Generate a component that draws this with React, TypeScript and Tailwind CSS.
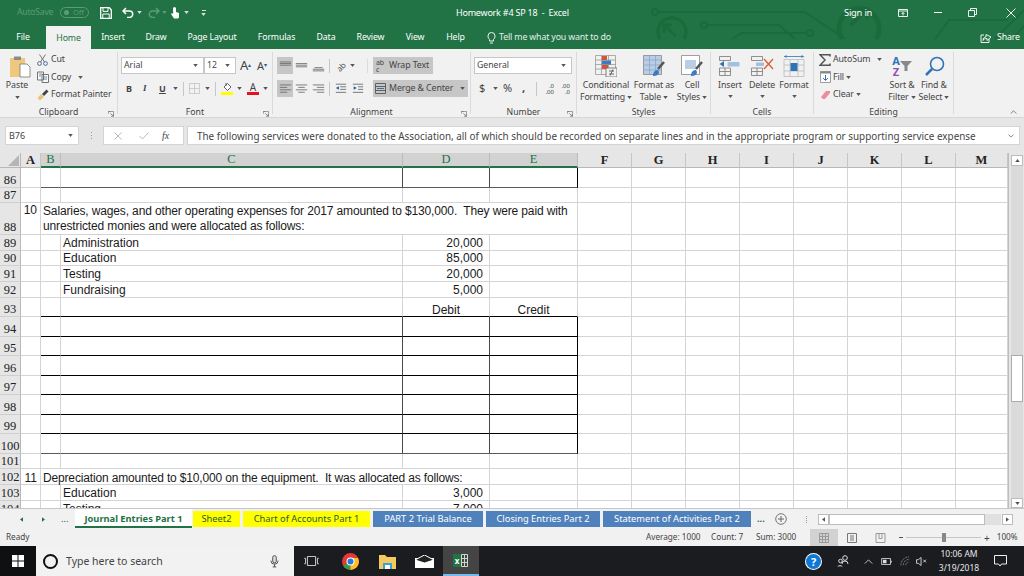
import React from "react";

const ui = "font-['Noto_Sans',sans-serif]";

function Ic({ w, h, vb, children, className = "" }: { w: string; h?: string; vb: string; children: React.ReactNode; className?: string }) {
  return (
    <svg viewBox={vb} className={`${w} ${h ?? ""} shrink-0 ${className}`} fill="none">
      {children}
    </svg>
  );
}

const Caret = ({ c = "#555", className = "" }: { c?: string; className?: string }) => (
  <svg viewBox="0 0 6 4" className={`w-[5px] h-[3px] shrink-0 ${className}`}><path d="M0 0h6L3 4z" fill={c} /></svg>
);

function Lines({ kind, active, className = "" }: { kind: string; active?: boolean; className?: string }) {
  const rows: Record<string, [number, number][]> = {
    left: [[1, 15], [1, 10], [1, 15], [1, 10]],
    center: [[1, 15], [4, 12], [1, 15], [4, 12]],
    right: [[1, 15], [6, 15], [1, 15], [6, 15]],
    top: [[1, 15], [1, 15], [1, 15]],
    mid: [[1, 15], [1, 15], [1, 15]],
    bot: [[3, 13], [1, 15], [1, 15]],
  };
  const ys = kind === "top" ? [3, 5, 7] : kind === "mid" ? [5, 7, 9] : kind === "bot" ? [10, 12, 14] : [3, 6, 9, 12];
  const xs = rows[kind];
  return (
    <div className={`w-[16px] h-[17px] shrink-0 flex items-center justify-center ${active ? "bg-[#c6c6c6]" : ""} ${className}`}>
      <svg viewBox="0 0 16 16" className="w-[13px] h-[14px]">
        {ys.map((y, i) => (
          <line key={i} x1={xs[i][0]} x2={xs[i][1]} y1={y} y2={y} stroke="#666" strokeWidth="1" />
        ))}
      </svg>
    </div>
  );
}

function Group({ w, label, launcher, children }: { w: string; label: string; launcher?: boolean; children: React.ReactNode }) {
  return (
    <div className={`${w} shrink-0 flex flex-col mt-[3px] mb-[3px] border-r border-[#dadada]`}>
      <div className="flex-1 flex min-h-0">{children}</div>
      <div className="relative h-[13px] text-center text-[8.7px] leading-[22px] text-[#444]">
        {label}
        {launcher && (
          <svg viewBox="0 0 8 8" className="absolute right-[3px] -bottom-[3px] w-[6px] h-[6px]">
            <path d="M.5 .5h7v7M.5 .5v3M.5.5h3M3 3l4 4M7 4v3H4" stroke="#777" fill="none" strokeWidth="1" />
          </svg>
        )}
      </div>
    </div>
  );
}

function BigBtn({ w, icon, l1, l2, caret2 }: { w: string; icon: React.ReactNode; l1: string; l2?: string; caret2?: boolean }) {
  return (
    <div className={`${w} shrink-0 flex flex-col items-center text-[8.8px] tracking-[-0.1px] leading-[12px] text-[#444] whitespace-nowrap`}>
      <div className="h-[24px] mt-[2px] shrink-0 flex items-center justify-center">{icon}</div>
      <div className="mt-[1px]">{l1}</div>
      {l2 ? (
        <div className="flex items-center gap-[2px]">{l2}{caret2 && <Caret />}</div>
      ) : (
        <div className="h-[12px] flex items-center"><Caret /></div>
      )}
    </div>
  );
}

const Title = () => (
  <div className="relative h-[25px] flex items-center text-white">
    <svg viewBox="0 0 1024 49" className="absolute left-0 top-0 w-[1024px] h-[49px] pointer-events-none">
      <g stroke="#1b6a3c" strokeWidth="2" fill="none">
        <circle cx="655" cy="12" r="3" />
        <path d="M658 12H805L845 39" />
        <circle cx="704" cy="25" r="3" />
        <path d="M707 25H779L795 39" />
        <circle cx="810" cy="33" r="3" />
        <path d="M732 39L742 33H807" />
        <path d="M935 39L949 20H1008" />
        <path d="M995 39L1024 10" />
        <path d="M1012 39L1024 26" />
        <path d="M660 39A14 14 0 1 1 684 39" strokeWidth="3" />
        <path d="M676 36L664 25M664 33V25H672" strokeWidth="3" />
        <path d="M842 39A20 20 0 1 1 876 39" strokeWidth="5" />
        <path d="M851 25L867 9M857 9H867V19" strokeWidth="4" />
      </g>
    </svg>
    <div className="relative w-[456px] shrink-0 flex items-center h-full">
      <span className={`ml-[17px] w-[42px] text-[8.6px] tracking-[-0.2px] text-[#5b9c78] ${ui}`}>AutoSave</span>
      <span className={`ml-[1px] w-[29px] h-[11px] rounded-full border border-[#5b9c78] flex items-center text-[7.5px] text-[#5b9c78] ${ui}`}>
        <span className="ml-[3px] w-[5px] h-[5px] rounded-full bg-[#5b9c78]" />
        <span className="ml-[4px]">Off</span>
      </span>
      <Ic w="w-[12px]" h="h-[12px]" vb="0 0 12 12" className="ml-[11px]">
        <path d="M.7.7h8.6l2 2v8.6H.7z" stroke="#fff" strokeWidth="1.3" />
        <path d="M3 1v3.400h5V1M2.800 11V7h6.400v4" stroke="#fff" strokeWidth="1" />
      </Ic>
      <Ic w="w-[12px]" h="h-[11px]" vb="0 0 12 11" className="ml-[10px]">
        <path d="M4 1L1 4l3 3M1 4h6.500a3.200 3.200 0 0 1 0 6.400H5" stroke="#fff" strokeWidth="1.5" />
      </Ic>
      <Caret c="#ddd" className="ml-[3px]" />
      <Ic w="w-[12px]" h="h-[11px]" vb="0 0 12 11" className="ml-[6px]">
        <path d="M8 1l3 3-3 3M11 4H4.500a3.200 3.200 0 0 0 0 6.400H7" stroke="#5b9c78" strokeWidth="1.5" />
      </Ic>
      <Caret c="#5b9c78" className="ml-[2px]" />
      <Ic w="w-[10px]" h="h-[13px]" vb="0 0 10 13" className="ml-[3px]">
        <path d="M3 2.500a1.500 1.500 0 0 1 3 0V6l3 1v4.500l-1 1H4L1 8l1-1 1.200 1z" fill="#fff" />
      </Ic>
      <Caret c="#ddd" className="ml-[4px]" />
      <div className="ml-[12px] flex flex-col items-center gap-[2px]">
        <span className="w-[4px] h-[1px] bg-[#ddd]" />
        <Caret c="#ddd" />
      </div>
    </div>
    <span className={`relative w-[388px] shrink-0 text-[9px] tracking-[-0.22px] whitespace-pre ${ui}`}>Homework #4 SP 18  -  Excel</span>
    <span className={`relative w-[54px] shrink-0 text-[9.3px] tracking-[-0.2px] ${ui}`}>Sign in</span>
    <Ic w="w-[10px]" h="h-[8px]" vb="0 0 10 8" className="relative">
      <path d="M.5.500h9v7h-9zM.5 2h9M5 6.500V3.500M3.500 5L5 3.500 6.500 5" stroke="#fff" strokeWidth=".9" />
    </Ic>
    <span className="relative ml-[26px] w-[8px] h-[1px] bg-white" />
    <Ic w="w-[9px]" h="h-[9px]" vb="0 0 9 9" className="relative ml-[26px]">
      <path d="M.5 2.500h6v6h-6zM2.500 2.500v-2h6v6h-2" stroke="#fff" strokeWidth=".9" />
    </Ic>
    <Ic w="w-[10px]" h="h-[10px]" vb="0 0 10 10" className="relative ml-[29px]">
      <path d="M.5.500l9 9M9.500.500l-9 9" stroke="#fff" strokeWidth=".9" />
    </Ic>
  </div>
);

const tabs: [string, string][] = [
  ["File", "w-[46px]"], ["Home", "w-[45px]"], ["Insert", "w-[44px]"], ["Draw", "w-[42px]"], ["Page Layout", "w-[70px]"],
  ["Formulas", "w-[59px]"], ["Data", "w-[40px]"], ["Review", "w-[49px]"], ["View", "w-[40px]"], ["Help", "w-[41px]"],
];

const TabRow = () => (
  <div className={`relative h-[24px] flex text-[8.8px] tracking-[-0.15px] text-white ${ui}`}>
    {tabs.map(([t, w]) => (
      <div key={t} className={`${w} shrink-0 text-center ${t === "Home" ? "mt-[1px] h-[23px] leading-[24px] bg-[#f1f1f1] text-[#217346]" : "leading-[25px]"}`}>{t}</div>
    ))}
    <Ic w="w-[9px]" h="h-[13px]" vb="0 0 9 13" className="ml-[11px] mt-[6px]">
      <path d="M2.500 8.500C1.500 7.500 1 6.500 1 5a3.500 3.500 0 0 1 7 0c0 1.500-.5 2.500-1.500 3.500v1.500h-4zM3 12h3" stroke="#fff" strokeWidth=".9" />
    </Ic>
    <span className="ml-[3px] w-[481px] leading-[25px] text-[#e4efe9]">Tell me what you want to do</span>
    <Ic w="w-[12px]" h="h-[11px]" vb="0 0 12 11" className="mt-[7px]">
      <path d="M4 3H1v7.500h8V7M6 5V2.500L11 5 7 8.500V6.500C5 6.500 3.500 7 3 8.500 3 6.500 4 5 6 5z" stroke="#fff" strokeWidth=".9" />
    </Ic>
    <span className="ml-[5px] leading-[25px]">Share</span>
  </div>
);

const Sel = ({ w, t }: { w: string; t: string }) => (
  <div className={`${w} h-[17px] shrink-0 bg-white border border-[#c6c6c6] flex items-center justify-between pl-[2px] pr-[5px] text-[8.7px] text-[#444]`}>
    <span>{t}</span><Caret />
  </div>
);

const Ribbon = () => (
  <div className={`h-[69px] bg-[#f1f1f1] border-b border-[#d6d6d6] flex ${ui}`}>
    <Group w="w-[118px]" label="Clipboard" launcher>
      <div className="w-[35px] shrink-0 flex flex-col items-center text-[8.8px] leading-[12px] text-[#444]">
        <Ic w="w-[22px]" h="h-[23px]" vb="0 0 22 23" className="mt-[3px] ml-[5px]">
          <path d="M1 3h15v19H1z" fill="#edc87e" />
          <path d="M5 1.500h7v3.500H5z" fill="#8a8a8a" />
          <path d="M11 9h7l3 3v10H11z" fill="#fff" stroke="#777" strokeWidth=".8" />
        </Ic>
        <span className="mt-[1px] -ml-[1px]">Paste</span>
        <Caret className="mt-[5px]" />
      </div>
      <div className="flex flex-col text-[8.8px] tracking-[-0.1px] text-[#444] whitespace-nowrap -mt-[1px] ml-[2px]">
        <div className="h-[17.5px] shrink-0 flex items-center">
          <Ic w="w-[11px]" h="h-[12px]" vb="0 0 11 12">
            <circle cx="2.500" cy="9.500" r="1.900" stroke="#4a6f99" strokeWidth="1" />
            <circle cx="8.500" cy="9.500" r="1.900" stroke="#4a6f99" strokeWidth="1" />
            <path d="M3.500 8L8.500.500M7.500 8L2.500.500" stroke="#666" strokeWidth=".9" />
          </Ic>
          <span className="ml-[3px]">Cut</span>
        </div>
        <div className="h-[17.5px] shrink-0 flex items-center">
          <Ic w="w-[12px]" h="h-[12px]" vb="0 0 12 12">
            <path d="M.5 1h6v8h-6zM5 3.500h6.500v8H5z" stroke="#666" strokeWidth=".9" fill="#f8f8f8" />
            <path d="M2 3h3M2 5h2M6.500 6h3.500M6.500 8h3.500" stroke="#4a6f99" strokeWidth=".8" />
          </Ic>
          <span className="ml-[2px]">Copy</span>
          <Caret className="ml-[7px]" />
        </div>
        <div className="h-[17.5px] shrink-0 flex items-center">
          <Ic w="w-[12px]" h="h-[12px]" vb="0 0 12 12">
            <path d="M.5 9L4 5l3 3-4 3.500z" fill="#e8c57a" />
            <path d="M5 5l2 2 4.500-4.500-2-2z" fill="#444" />
          </Ic>
          <span className="ml-[2px]">Format Painter</span>
        </div>
      </div>
    </Group>

    <Group w="w-[155px]" label="Font" launcher>
      <div className="flex flex-col pl-[3px] pt-[5px]">
        <div className="flex items-center">
          <Sel w="w-[83px]" t="Arial" />
          <Sel w="w-[32px]" t="12" />
          <span className="ml-[4px] w-[13px] text-[13px] text-[#444] leading-none">A<sup className="text-[6px] text-[#2b579a]">▴</sup></span>
          <span className="ml-[4px] text-[11px] text-[#444] leading-none">A<sup className="text-[6px] text-[#2b579a]">▾</sup></span>
        </div>
        <div className="flex items-center h-[17px] mt-[6px] text-[9px] text-[#444] font-bold">
          <span className="ml-[5px] w-[7px]">B</span>
          <span className="ml-[10px] w-[4px] italic font-['Liberation_Serif',serif]">I</span>
          <span className="ml-[12px] w-[7px] underline">U</span>
          <Caret className="ml-[7px]" />
          <span className="ml-[5px] w-[1px] h-[14px] bg-[#c6c6c6]" />
          <Ic w="w-[11px]" h="h-[11px]" vb="0 0 11 11" className="ml-[5px]">
            <path d="M.5.500h10v10H.5zM5.500.500v10M.5 5.500h10" stroke="#aaa" strokeWidth="1" strokeDasharray="1 1" />
          </Ic>
          <Caret className="ml-[5px]" />
          <span className="ml-[5px] w-[1px] h-[14px] bg-[#c6c6c6]" />
          <div className="ml-[5px] flex flex-col items-center w-[12px]">
            <Ic w="w-[10px]" h="h-[10px]" vb="0 0 10 10"><path d="M2 5l3.500-3.500L9 5 5.500 8.500zM4 1v3" stroke="#555" strokeWidth=".9" fill="#fff" /></Ic>
            <span className="w-[12px] h-[3px] bg-[#ffff00]" />
          </div>
          <Caret className="ml-[4px]" />
          <div className="ml-[5px] flex flex-col items-center w-[12px]">
            <span className="text-[10px] leading-[10px] font-normal">A</span>
            <span className="w-[12px] h-[3px] bg-[#e81123]" />
          </div>
          <Caret className="ml-[4px]" />
        </div>
      </div>
    </Group>

    <Group w="w-[198px]" label="Alignment" launcher>
      <div className="flex flex-col pl-[4px] pt-[5px] whitespace-nowrap">
        <div className="flex items-center">
          <Lines kind="top" active />
          <Lines kind="mid" />
          <Lines kind="bot" className="ml-[1px]" />
          <span className="ml-[3px] w-[1px] h-[14px] bg-[#c6c6c6]" />
          <span className="ml-[6px] w-[12px] text-[8px] text-[#555] -rotate-45 leading-none">ab</span>
          <Caret className="ml-[2px]" />
          <span className="ml-[12px] w-[1px] h-[14px] bg-[#dcdcdc]" />
          <div className="ml-[5px] w-[60px] h-[17px] bg-[#c6c6c6] flex items-center text-[8.8px] tracking-[-0.1px] text-[#444]">
            <span className="ml-[3px] w-[10px] text-[7px] leading-[7px] text-[#444]">ab<br />c</span>
            <span className="ml-[3px]">Wrap Text</span>
          </div>
        </div>
        <div className="flex items-center mt-[6px]">
          <Lines kind="left" active />
          <Lines kind="center" />
          <Lines kind="right" className="ml-[1px]" />
          <span className="ml-[3px] w-[1px] h-[14px] bg-[#c6c6c6]" />
          <Ic w="w-[12px]" h="h-[11px]" vb="0 0 14 11" className="ml-[5px]">
            <path d="M1 .5h12M6 3.500h7M6 6.500h7M1 10h12" stroke="#666" /><path d="M4.500 3L1 5l3.500 2z" fill="#2b579a" />
          </Ic>
          <Ic w="w-[12px]" h="h-[11px]" vb="0 0 14 11" className="ml-[5px]">
            <path d="M1 .5h12M7 3.500h6M7 6.500h6M1 10h12" stroke="#666" /><path d="M2 3l3.500 2L2 7z" fill="#2b579a" />
          </Ic>
          <div className="ml-[9px] w-[95px] h-[17px] bg-[#c6c6c6] flex items-center text-[8.8px] tracking-[-0.1px] text-[#444]">
            <Ic w="w-[11px]" h="h-[11px]" vb="0 0 11 11" className="ml-[2px]">
              <path d="M.5.500h10v10H.5zM.5 3.500h10M.5 7.500h10" stroke="#555" strokeWidth=".9" />
              <path d="M2 5.500h7" stroke="#2f75b5" />
            </Ic>
            <span className="ml-[3px]">Merge &amp; Center</span>
            <Caret className="ml-[7px]" />
          </div>
        </div>
      </div>
    </Group>

    <Group w="w-[106px]" label="Number" launcher>
      <div className="flex flex-col pl-[3px] pt-[5px]">
        <Sel w="w-[98px]" t="General" />
        <div className="flex items-center h-[17px] mt-[6px] text-[#444]">
          <span className="ml-[5px] w-[8px] text-[11px]">$</span>
          <Caret className="ml-[6px]" />
          <span className="ml-[5px] w-[11px] text-[11px]">%</span>
          <span className="ml-[8px] w-[5px] text-[11px] font-bold">,</span>
          <span className="ml-[9px] w-[1px] h-[14px] bg-[#c6c6c6]" />
          <span className="ml-[5px] w-[12px] text-[6px] leading-[6px] text-[#444] text-right">.0<br />.00</span>
          <span className="ml-[4px] w-[12px] text-[6px] leading-[6px] text-[#444] text-right">.00<br />.0</span>
        </div>
      </div>
    </Group>

    <Group w="w-[134px]" label="Styles">
      <BigBtn w="w-[58px]" l1="Conditional" l2="Formatting" caret2 icon={
        <Ic w="w-[22px]" h="h-[22px]" vb="0 0 22 22">
          <path d="M.5.500h20v19H.5zM.5 5h20M.5 9.500h20M.5 14h20M6.500.500v19M13.500.500v19" stroke="#999" strokeWidth=".8" />
          <path d="M7 1h5v4H7z" fill="#d9542b" /><path d="M7 5.500h9v4H7z" fill="#3b7bbf" /><path d="M7 10h6v4H7z" fill="#d9542b" />
          <path d="M11 13h11v9H11z" fill="#f1f1f1" stroke="#666" strokeWidth=".8" /><path d="M14 16h5M14 19h5M18 14.500l-3 6" stroke="#444" strokeWidth=".8" />
        </Ic>} />
      <BigBtn w="w-[38px]" l1="Format as" l2="Table" caret2 icon={
        <Ic w="w-[23px]" h="h-[22px]" vb="0 0 23 22">
          <path d="M.5.500h18v19H.5z" fill="#b9cde5" stroke="#888" strokeWidth=".8" />
          <path d="M.5 5h18M.5 10h18M.5 15h18M6.500.500v19M12.500.500v19" stroke="#8aa7c9" strokeWidth=".8" />
          <path d="M21 7l-6 7" stroke="#555" strokeWidth="2.500" /><path d="M10 21c0-4 2-6 5-6l1 2c0 3-3 4-6 4z" fill="#3b7bbf" />
        </Ic>} />
      <BigBtn w="w-[38px]" l1="Cell" l2="Styles" caret2 icon={
        <Ic w="w-[23px]" h="h-[22px]" vb="0 0 23 22">
          <path d="M.5.500h18v19H.5z" fill="#fff" stroke="#888" strokeWidth=".8" />
          <path d="M4 5h11v9H4z" fill="#b9cde5" />
          <path d="M21 7l-6 7" stroke="#555" strokeWidth="2.500" /><path d="M10 21c0-4 2-6 5-6l1 2c0 3-3 4-6 4z" fill="#3b7bbf" />
        </Ic>} />
    </Group>

    <Group w="w-[103px]" label="Cells">
      <div className="flex pl-[3px]">
        <BigBtn w="w-[32px]" l1="Insert" icon={
          <Ic w="w-[22px]" h="h-[20px]" vb="0 0 22 20">
            <path d="M.5.500h11v4H.5zM.5 12h11v7.500H.5zM6 12v7.500M.5 15.500h11" stroke="#777" strokeWidth=".8" />
            <path d="M9 6.500h11v3.500H9z" fill="#a5c0dd" stroke="#a5c0dd" /><path d="M5 5v6L.5 8z" fill="#2f75b5" />
          </Ic>} />
        <BigBtn w="w-[32px]" l1="Delete" icon={
          <Ic w="w-[23px]" h="h-[20px]" vb="0 0 23 20">
            <path d="M.5.500h11v4H.5zM.5 12h11v7.500H.5zM6 12v7.500M.5 15.500h11" stroke="#777" strokeWidth=".8" />
            <path d="M5 6.500h8v3.500H5z" fill="#a5c0dd" /><path d="M13 3l9 10M22 3l-9 10" stroke="#e4572e" strokeWidth="1.300" />
          </Ic>} />
        <BigBtn w="w-[32px]" l1="Format" icon={
          <Ic w="w-[22px]" h="h-[23px]" vb="0 0 22 23">
            <path d="M1 4.500h20v17H1zM7 4.500v17M15 4.500v17M1 10h20M1 16h20" stroke="#bbb" strokeWidth=".8" />
            <path d="M7.500 8h7v8h-7z" fill="#2f75b5" /><path d="M1 1.500h20M3 0v3M19 0v3" stroke="#2f75b5" strokeWidth=".8" />
          </Ic>} />
      </div>
    </Group>

    <Group w="w-[140px]" label="Editing">
      <div className="flex flex-col w-[67px] ml-[5px] shrink-0 text-[8.8px] tracking-[-0.1px] text-[#444] whitespace-nowrap -mt-[1px]">
        <div className="h-[17.5px] shrink-0 flex items-center">
          <Ic w="w-[12px]" h="h-[12px]" vb="0 0 12 12"><path d="M11 2.500V.7H1L6 6 1 11.300h10V9.500" stroke="#555" strokeWidth="1.500" /></Ic>
          <span className="ml-[2px]">AutoSum</span>
          <Caret className="ml-[7px]" />
        </div>
        <div className="h-[17.5px] shrink-0 flex items-center">
          <Ic w="w-[11px]" h="h-[12px]" vb="0 0 11 12" className="ml-[1px]">
            <path d="M.5.500h10v11H.5z" stroke="#888" fill="#fff" strokeWidth=".8" /><path d="M.5.500h10v2H.5z" fill="#888" /><path d="M5.500 4v5M3 7l2.500 2.500L8 7" stroke="#2f75b5" />
          </Ic>
          <span className="ml-[2px]">Fill</span>
          <Caret className="ml-[2px]" />
        </div>
        <div className="h-[17.5px] shrink-0 flex items-center">
          <Ic w="w-[11px]" h="h-[10px]" vb="0 0 11 10" className="ml-[1px]">
            <path d="M1 7l5-6h4L10 3 5 9H3z" fill="#f08a9c" />
          </Ic>
          <span className="ml-[2px]">Clear</span>
          <Caret className="ml-[2px]" />
        </div>
      </div>
      <BigBtn w="w-[32px]" l1="Sort &" l2="Filter" caret2 icon={
        <div className="flex items-center">
          <div className="text-[11px] leading-[11px] font-bold text-center">
            <div className="text-[#2f75b5]">A</div>
            <div className="text-[#8d4fb5]">Z</div>
          </div>
          <Ic w="w-[12px]" h="h-[12px]" vb="0 0 12 12"><path d="M0 1h12L7.500 6v5h-3V6z" fill="#888" /></Ic>
        </div>} />
      <BigBtn w="w-[32px]" l1="Find &" l2="Select" caret2 icon={
        <Ic w="w-[21px]" h="h-[21px]" vb="0 0 21 21">
          <circle cx="13" cy="8" r="6.500" stroke="#2f75b5" strokeWidth="1.600" />
          <path d="M8 13l-6 6" stroke="#2f75b5" strokeWidth="2.500" />
        </Ic>} />
    </Group>
    <div className="flex-1 flex justify-end items-end pb-[3px] pr-[7px]">
      <svg viewBox="0 0 8 5" className="w-[7px] h-[4px]"><path d="M.5 4.500L4 1l3.500 3.500" stroke="#666" fill="none" /></svg>
    </div>
  </div>
);

const FormulaBar = () => (
  <div className={`h-[35px] bg-[#e6e6e6] flex pl-[5px] pt-[8px] pb-[8px] ${ui}`}>
    <div className="w-[74px] h-[19px] bg-white border border-[#d4d4d4] flex items-center justify-between pl-[3px] pr-[5px] text-[9px] text-[#444]">
      B76 <Caret />
    </div>
    <div className="w-[24px] flex flex-col items-center justify-center gap-[2px]">
      <span className="w-[1px] h-[1px] bg-[#999]" /><span className="w-[1px] h-[1px] bg-[#999]" /><span className="w-[1px] h-[1px] bg-[#999]" />
    </div>
    <div className="w-[81px] h-[19px] bg-white border border-[#d4d4d4] flex items-center pl-[10px]">
      <Ic w="w-[8px]" h="h-[8px]" vb="0 0 8 8"><path d="M.5.500l7 7M7.500.500l-7 7" stroke="#bbb" /></Ic>
      <Ic w="w-[10px]" h="h-[8px]" vb="0 0 10 8" className="ml-[17px]"><path d="M.5 4l3 3 6-6.500" stroke="#bbb" /></Ic>
      <span className="ml-[13px] text-[10px] italic font-['Liberation_Serif',serif] text-[#444]">fx</span>
    </div>
    <div className="ml-[3px] w-[833px] h-[19px] bg-white border border-[#d4d4d4] flex items-center justify-between pl-[9px] pr-[5px] text-[9.88px] text-[#444] whitespace-nowrap">
      <span className="pt-[1px]">The following services were donated to the Association, all of which should be recorded on separate lines and in the appropriate program or supporting service expense</span>
      <svg viewBox="0 0 8 5" className="w-[6px] h-[4px]"><path d="M.5 .5L4 4l3.500-3.500" stroke="#666" fill="none" /></svg>
    </div>
  </div>
);

const colLetters = ["A", "B", "C", "D", "E", "F", "G", "H", "I", "J", "K", "L", "M"];
const selected = ["B", "C", "D", "E"];
const rowNums = [86, 87, 88, 89, 90, 91, 92, 93, 94, 95, 96, 97, 98, 99, 100, 101, 102, 103, 104];

function cellBorder(row: number, col: string) {
  const boxed = row === 86 || (row >= 94 && row <= 100);
  const inTable = ["B", "C", "D", "E"].includes(col);
  let b = "border-b-[#d4d4d4]";
  if (inTable && (row === 86 || row === 100)) b = "border-b-[#5a5a5a]";
  else if (inTable && row >= 93 && row <= 99) b = "border-b-black";
  let r = "border-r-[#d4d4d4]";
  if (boxed && (col === "C" || col === "D")) r = "border-r-[#4a4a4a]";
  if (boxed && col === "E") r = "border-r-black";
  return `${b} ${r}`;
}

const content: Record<string, { t: string; cls: string }> = {
  "89C": { t: "Administration", cls: "pl-[2px] leading-[13px]" },
  "90C": { t: "Education", cls: "pl-[2px] leading-[13px]" },
  "91C": { t: "Testing", cls: "pl-[2px] leading-[13px]" },
  "92C": { t: "Fundraising", cls: "pl-[2px] leading-[13px]" },
  "103C": { t: "Education", cls: "pl-[2px] leading-[13px]" },
  "104C": { t: "Testing", cls: "pl-[2px] leading-[13px]" },
  "89D": { t: "20,000", cls: "justify-end pr-[6px] leading-[13px]" },
  "90D": { t: "85,000", cls: "justify-end pr-[6px] leading-[13px]" },
  "91D": { t: "20,000", cls: "justify-end pr-[6px] leading-[13px]" },
  "92D": { t: "5,000", cls: "justify-end pr-[6px] leading-[13px]" },
  "103D": { t: "3,000", cls: "justify-end pr-[6px] leading-[13px]" },
  "104D": { t: "7,000", cls: "justify-end pr-[6px] leading-[13px]" },
  "93D": { t: "Debit", cls: "justify-center leading-[11px]" },
  "93E": { t: "Credit", cls: "justify-center leading-[11px]" },
  "88A": { t: "10", cls: "justify-end pr-[3px] items-start" },
  "102A": { t: "11", cls: "justify-end pr-[3px] leading-[11px]" },
};

function Sheet() {
  return (
    <div className="grid w-[1008px] h-[355px] overflow-hidden bg-white grid-cols-[21px_20px_20px_342px_87px_88px_54px_54px_54px_54px_54px_54px_54px_52px] grid-rows-[15px_20px_15px_32px_16px_15px_16px_16px_19px_20px_19px_20px_19px_20px_19px_20px_15px_16px_16px_16px] font-['Liberation_Sans',sans-serif] text-[12px] leading-[15px] text-[#1a1a1a]">
      <div className="bg-[#e6e6e6] border-r border-b border-r-[#b8b8b8] border-b-[#b8b8b8] flex items-end justify-end pr-[1px] pb-[1px]">
        <svg viewBox="0 0 11 11" className="w-[11px] h-[11px]"><path d="M11 0v11H0z" fill="#b5b5b5" /></svg>
      </div>
      {colLetters.map((c) => {
        const sel = selected.includes(c);
        return (
          <div key={c} className={`flex items-center justify-center font-['Liberation_Serif',serif] text-[12.5px] border-r ${sel ? "bg-[#d2d2d2] text-[#217346] border-b-2 border-b-[#217346] border-r-[#bcbcbc]" : "bg-[#e6e6e6] text-[#222] font-bold border-b border-b-[#b8b8b8] border-r-[#c6c6c6]"}`}>{c}</div>
        );
      })}
      {rowNums.map((r) => (
        <React.Fragment key={r}>
          <div className="bg-[#e6e6e6] border-r border-b border-r-[#b8b8b8] border-b-[#cfcfcf] flex items-end justify-center font-['Liberation_Serif',serif] text-[12.5px] leading-[14px] text-[#222] overflow-hidden">{r}</div>
          {colLetters.map((c) => {
            if (r === 88 && c === "B") {
              return (
                <div key={c} className="col-span-4 border-r border-b border-r-[#d4d4d4] border-b-[#d4d4d4] pl-[2px] pt-[1px] whitespace-pre tracking-[-0.134px]">
                  {"Salaries, wages, and other operating expenses for 2017 amounted to $130,000.  They were paid with\nunrestricted monies and were allocated as follows:"}
                </div>
              );
            }
            if (r === 88 && (c === "C" || c === "D" || c === "E")) return null;
            if (r === 102 && c === "B") {
              return (
                <div key={c} className="col-span-3 border-r border-b border-r-[#d4d4d4] border-b-[#d4d4d4] pl-[2px] flex items-end whitespace-pre tracking-[-0.16px] leading-[11px]">
                  {"Depreciation amounted to $10,000 on the equipment.  It was allocated as follows:"}
                </div>
              );
            }
            if (r === 102 && (c === "C" || c === "D")) return null;
            const k = content[`${r}${c}`];
            return (
              <div key={c} className={`border-r border-b ${cellBorder(r, c)} flex items-end whitespace-nowrap ${r === 104 ? "" : "overflow-hidden"} ${k ? k.cls : ""}`}>
                {k ? k.t : ""}
              </div>
            );
          })}
        </React.Fragment>
      ))}
    </div>
  );
}

const VScroll = () => (
  <div className="w-[16px] h-[355px] bg-[#e6e6e6] border-l border-[#bdbdbd] pl-[1px]">
    <div className="w-[12px] h-[355px] ml-[1px] pt-[2px] flex flex-col">
      <div className="h-[11px] shrink-0 bg-white border border-[#bcbcbc] flex items-center justify-center">
        <svg viewBox="0 0 6 4" className="w-[5px] h-[3px]"><path d="M3 0l3 4H0z" fill="#555" /></svg>
      </div>
      <div className="flex-1 bg-[#dadada] pt-[189px]">
        <div className="h-[47px] bg-white border border-[#ababab]" />
      </div>
      <div className="h-[10px] shrink-0 bg-white border border-[#bcbcbc] flex items-center justify-center">
        <Caret />
      </div>
    </div>
  </div>
);

const sheetTabs: [string, string, string][] = [
  ["Sheet2", "w-[47px] ml-[1px]", "bg-[#ffff00] text-[#1f5c34]"],
  ["Chart of Accounts Part 1", "w-[127px] ml-[3px]", "bg-[#ffff00] text-[#1f5c34]"],
  ["PART 2 Trial Balance", "w-[110px] ml-[3px]", "bg-[#4f81bd] text-white"],
  ["Closing Entries Part 2", "w-[114px] ml-[3px]", "bg-[#4f81bd] text-white"],
  ["Statement of Activities Part 2", "w-[148px] ml-[3px]", "bg-[#4f81bd] text-white"],
];

const TabBar = () => (
  <div className={`h-[21px] bg-[#f1f1f1] border-t border-[#c6c6c6] flex items-center text-[9.3px] ${ui}`}>
    <svg viewBox="0 0 4 6" className="ml-[20px] w-[3px] h-[5px]"><path d="M4 0v6L0 3z" fill="#217346" /></svg>
    <svg viewBox="0 0 4 6" className="ml-[19px] w-[3px] h-[5px]"><path d="M0 0v6l4-3z" fill="#217346" /></svg>
    <span className="ml-[16px] w-[14px] text-[#444]">...</span>
    <div className="w-[117px] -mt-[2px] h-[19px] bg-white border-b-2 border-[#217346] text-[#217346] font-bold text-center leading-[20px] text-[9.3px]">Journal Entries Part 1</div>
    {sheetTabs.map(([t, w, c]) => (
      <div key={t} className={`${w} ${c} h-[16px] leading-[16px] text-center shrink-0`}>{t}</div>
    ))}
    <span className="ml-[6px] w-[14px] text-[#217346] font-bold">...</span>
    <svg viewBox="0 0 12 12" className="ml-[4px] w-[12px] h-[12px]"><circle cx="6" cy="6" r="5.300" stroke="#777" fill="none" /><path d="M3 6h6M6 3v6" stroke="#666" /></svg>
    <div className="ml-[19px] w-[1px] h-[7px] border-l border-dotted border-[#999]" />
    <div className="ml-[11px] w-[11px] h-[11px] bg-white border border-[#bcbcbc] flex items-center justify-center">
      <svg viewBox="0 0 4 6" className="w-[3px] h-[5px]"><path d="M4 0v6L0 3z" fill="#555" /></svg>
    </div>
    <div className="w-[156px] h-[11px] bg-white border border-[#bcbcbc]" />
    <div className="w-[16px] h-[11px] bg-[#e0e0e0]" />
    <div className="ml-[1px] w-[11px] h-[11px] bg-white border border-[#bcbcbc] flex items-center justify-center">
      <svg viewBox="0 0 4 6" className="w-[3px] h-[5px]"><path d="M0 0v6l4-3z" fill="#555" /></svg>
    </div>
  </div>
);

const StatusBar = () => (
  <div className={`h-[17px] bg-[#f1f1f1] flex items-center text-[8.2px] text-[#444] whitespace-nowrap ${ui}`}>
    <span className="ml-[6px] w-[640px]">Ready</span>
    <span className="w-[65px]">Average: 1000</span>
    <span className="w-[45px]">Count: 7</span>
    <span className="w-[54px]">Sum: 3000</span>
    <div className="w-[28px] h-[17px] bg-[#d2d2d2] flex items-center justify-center">
      <svg viewBox="0 0 10 10" className="w-[10px] h-[10px]"><path d="M.5.500h9v9h-9zM.5 3.500h9M.5 6.500h9M3.500.500v9M6.500.500v9" stroke="#999" fill="none" /></svg>
    </div>
    <svg viewBox="0 0 10 10" className="ml-[9px] w-[10px] h-[10px]"><path d="M.5.500h9v9h-9zM3 3h4M3 5h4M3 7h4" stroke="#777" fill="none" /></svg>
    <svg viewBox="0 0 10 10" className="ml-[18px] w-[11px] h-[10px]"><path d="M.5 9.500h9V.500h-9zM3.500.500v5h3v-5" stroke="#999" fill="none" /></svg>
    <span className="ml-[13px] w-[4px] h-[1px] bg-[#555]" />
    <div className="ml-[3px] relative w-[75px] h-[1px] bg-[#c6c6c6]">
      <span className="absolute left-[36px] -top-[4px] w-[4px] h-[9px] bg-[#888]" />
    </div>
    <span className="ml-[3px] text-[10px] leading-none">+</span>
    <span className="ml-[7px]">100%</span>
  </div>
);

const Taskbar = () => (
  <div className={`h-[30px] bg-[#1b1c20] flex items-center text-white ${ui}`}>
    <div className="w-[36px] h-[30px] bg-[#0f1012] flex items-center justify-center">
      <svg viewBox="0 0 12 12" className="w-[12px] h-[12px]"><path d="M0 0h5.500v5.500H0zM6.500 0H12v5.500H6.500zM0 6.500h5.500V12H0zM6.500 6.500H12V12H6.500z" fill="#fff" /></svg>
    </div>
    <div className="w-[258px] h-[30px] bg-[#f2f2f2] flex items-center text-[#444] text-[10.5px]">
      <span className="ml-[7px] w-[15px] h-[15px] rounded-full border-2 border-[#111]" />
      <span className="ml-[8px] w-[204px] pt-[2px]">Type here to search</span>
      <svg viewBox="0 0 10 14" className="w-[9px] h-[13px]"><rect x="3" y=".5" width="4" height="8" rx="2" stroke="#444" fill="#ddd" /><path d="M1 6a4 4 0 0 0 8 0M5 10v3M3 13h4" stroke="#444" fill="none" /></svg>
    </div>
    <svg viewBox="0 0 16 11" className="ml-[10px] w-[15px] h-[10px]"><path d="M3.500.500h9v10h-9zM0 2.500h1.500v6H0M16 2.500h-1.500v6H16" stroke="#ddd" fill="none" /></svg>
    <div className="ml-[23px] w-[17px] h-[17px] rounded-full bg-[#e53935] relative overflow-hidden">
      <svg viewBox="0 0 17 17" className="absolute inset-0 w-[17px] h-[17px]">
        <path d="M8.500 8.500L1 13a8.500 8.500 0 0 0 7.500 4z" fill="#2f9e44" />
        <path d="M8.500 5h8a8.500 8.500 0 0 1-8 12z" fill="#fbc02d" />
        <circle cx="8.500" cy="8.500" r="4" fill="#fff" /><circle cx="8.500" cy="8.500" r="3" fill="#2979d9" />
      </svg>
    </div>
    <svg viewBox="0 0 17 15" className="ml-[20px] w-[17px] h-[15px]"><path d="M0 1h6l2 2h9v12H0z" fill="#f4c95d" /><path d="M4 9h9v6H4z" fill="#3aa0e0" /><path d="M6 11h5v4H6z" fill="#fff" /></svg>
    <svg viewBox="0 0 19 13" className="ml-[19px] w-[19px] h-[13px]"><path d="M0 3h19v10H0z" fill="#fff" /><path d="M0 5l9.500-5L19 5 9.500 8z" fill="#222" stroke="#fff" /></svg>
    <div className="ml-[9px] w-[36px] h-[30px] bg-[#444] border-b-2 border-[#76b9ed] flex items-center justify-center">
      <div className="w-[16px] h-[13px] flex items-center">
        <span className="w-[8px] h-[13px] bg-[#217346] text-[8px] leading-[13px] text-center font-bold">x</span>
        <svg viewBox="0 0 7 13" className="w-[7px] h-[13px]"><path d="M.5.500h6v12h-6zM.5 4.500h6M.5 8.500h6M3.500.500v12" stroke="#c9d9cf" fill="none" /></svg>
      </div>
    </div>
    <div className="ml-[326px] w-[17px] h-[17px] rounded-full bg-white flex items-center justify-center">
      <span className="w-[15px] h-[15px] rounded-full bg-[#0f78d4] text-[11px] leading-[15px] text-center font-bold">?</span>
    </div>
    <svg viewBox="0 0 12 12" className="ml-[15px] w-[12px] h-[12px]"><circle cx="8" cy="3" r="2.300" stroke="#ddd" fill="none" /><circle cx="3.500" cy="6" r="1.800" stroke="#ddd" fill="none" /><path d="M5 9a3 3 0 0 1 6 0M.5 12a3 3 0 0 1 5 0" stroke="#ddd" fill="none" /></svg>
    <svg viewBox="0 0 10 6" className="ml-[15px] w-[9px] h-[5px]"><path d="M.5 5.500L5 1l4.500 4.500" stroke="#ddd" fill="none" /></svg>
    <svg viewBox="0 0 12 8" className="ml-[8px] w-[11px] h-[7px]"><path d="M.5.500h10v7H.5z" stroke="#ddd" fill="none" /><path d="M2 2h4v4H2zM11 3h1v2h-1z" fill="#ddd" /></svg>
    <svg viewBox="0 0 12 12" className="ml-[8px] w-[10px] h-[10px]"><path d="M1 11a10 10 0 0 1 10-10M4 11a7 7 0 0 1 7-7M7 11a4 4 0 0 1 4-4" stroke="#bbb" strokeDasharray="1 1" fill="none" /></svg>
    <svg viewBox="0 0 12 10" className="ml-[6px] w-[11px] h-[9px]"><path d="M.5 3h2L5.500.500v9L2.500 7h-2zM8 3l3 3M11 3L8 6" stroke="#ddd" fill="none" /></svg>
    <div className="ml-[10px] w-[44px] text-center text-[8.5px] leading-[14px] text-[#e8e8e8]">
      <div>10:06 AM</div>
      <div>3/19/2018</div>
    </div>
    <svg viewBox="0 0 13 12" className="ml-[13px] w-[13px] h-[12px]"><path d="M.5.500h12v8.500H7.500L6 11 4.500 9h-4z" stroke="#eee" fill="none" /></svg>
  </div>
);

export default function App() {
  return (
    <div className="w-[1024px] h-[576px] overflow-hidden flex flex-col bg-white">
      <div className="bg-[#217346] h-[49px] shrink-0">
        <Title />
        <TabRow />
      </div>
      <Ribbon />
      <FormulaBar />
      <div className="flex">
        <Sheet />
        <VScroll />
      </div>
      <TabBar />
      <StatusBar />
      <Taskbar />
    </div>
  );
}
